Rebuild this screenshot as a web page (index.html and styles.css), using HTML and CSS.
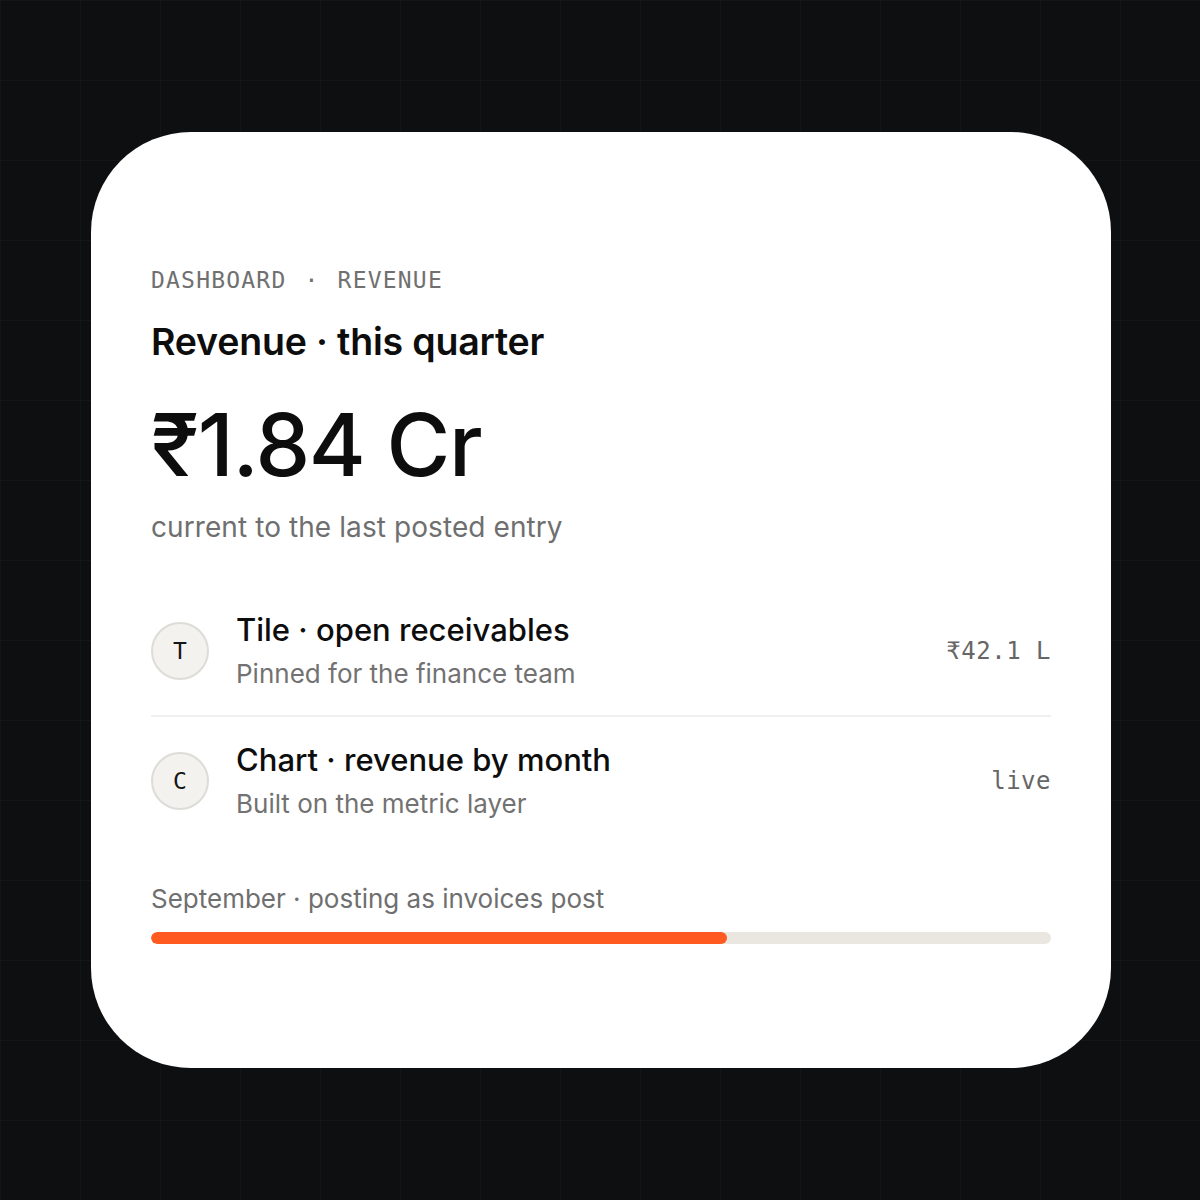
FILE: index.html
```html
<!DOCTYPE html>
<html lang="en">
<head>
    <meta charset="UTF-8">
    <meta name="viewport" content="width=device-width, initial-scale=1.0">
    <title>Revenue · this quarter</title>
    <link rel="stylesheet" href="styles.css">
</head>
<body>

    <div class="card">
        <div class="crumbs">Dashboard <span class="dot">·</span> Revenue</div>
        <h1 class="title">Revenue · this quarter</h1>
        <div class="amount">₹1.84 Cr</div>
        <p class="note">current to the last posted entry</p>

        <ul class="items">
            <li class="item">
                <div class="badge">T</div>
                <div class="item-text">
                    <div class="item-name">Tile · open receivables</div>
                    <div class="item-sub">Pinned for the finance team</div>
                </div>
                <div class="item-value">₹42.1 L</div>
            </li>
            <li class="item">
                <div class="badge">C</div>
                <div class="item-text">
                    <div class="item-name">Chart · revenue by month</div>
                    <div class="item-sub">Built on the metric layer</div>
                </div>
                <div class="item-value">live</div>
            </li>
        </ul>

        <div class="progress-label">September · posting as invoices post</div>
        <div class="progress">
            <div class="progress-fill" style="width: 64%"></div>
        </div>
    </div>

</body>
</html>
```

FILE: styles.css
```css
* {
    margin: 0;
    padding: 0;
    box-sizing: border-box;
}

body {
    display: flex;
    justify-content: center;
    align-items: center;
    height: 100vh;
    background-color: #0e0f11;
    background-image:
        linear-gradient(rgba(255, 255, 255, 0.025) 1px, transparent 1px),
        linear-gradient(90deg, rgba(255, 255, 255, 0.025) 1px, transparent 1px);
    background-size: 80px 80px;
    font-family: 'Inter', 'Noto Sans', sans-serif;
    color: #0d0d0d;
}

.card {
    width: 1020px;
    margin-left: 2px;
    background: #fff;
    border-radius: 100px;
    padding: 135px 60px 124px;
}

.crumbs {
    font-family: 'DejaVu Sans Mono', monospace;
    font-size: 23px;
    letter-spacing: 1.2px;
    text-transform: uppercase;
    color: #707070;
    line-height: 1.2;
}

.crumbs .dot {
    margin: 0 3px;
}

.title {
    margin-top: 25px;
    font-size: 37.5px;
    font-weight: 600;
    letter-spacing: -0.005em;
    line-height: 1.2;
}

.amount {
    margin-top: 33px;
    font-size: 87px;
    font-weight: 500;
    letter-spacing: -0.015em;
    line-height: 1.1;
}

.note {
    margin-top: 18px;
    font-size: 28px;
    letter-spacing: 0.003em;
    color: #6f6f6f;
    line-height: 1.2;
}

.items {
    list-style: none;
    margin-top: 42px;
}

.item {
    display: flex;
    align-items: center;
    gap: 27px;
    padding: 24.5px 0;
}

.item + .item {
    border-top: 2px solid #efefef;
}

.badge {
    width: 58px;
    height: 58px;
    flex-shrink: 0;
    border-radius: 50%;
    background: #f3f2ee;
    border: 2px solid #dddcd7;
    display: flex;
    align-items: center;
    justify-content: center;
    font-family: 'DejaVu Sans Mono', monospace;
    font-size: 23px;
    color: #151515;
}

.item-text {
    flex: 1;
}

.item-name {
    font-size: 31px;
    font-weight: 500;
    line-height: 1.25;
}

.item-sub {
    margin-top: 8px;
    font-size: 26px;
    color: #727272;
    line-height: 1.25;
}

.item-value {
    font-family: 'DejaVu Sans Mono', monospace;
    font-size: 24px;
    letter-spacing: 0.5px;
    color: #666;
}

.progress-label {
    margin-top: 38px;
    font-size: 26px;
    color: #6f6f6f;
    line-height: 1.2;
}

.progress {
    margin-top: 18px;
    height: 12px;
    border-radius: 6px;
    background: #e9e7e0;
    overflow: hidden;
}

.progress-fill {
    height: 100%;
    border-radius: 6px;
    background: #ff5a1f;
}
```
